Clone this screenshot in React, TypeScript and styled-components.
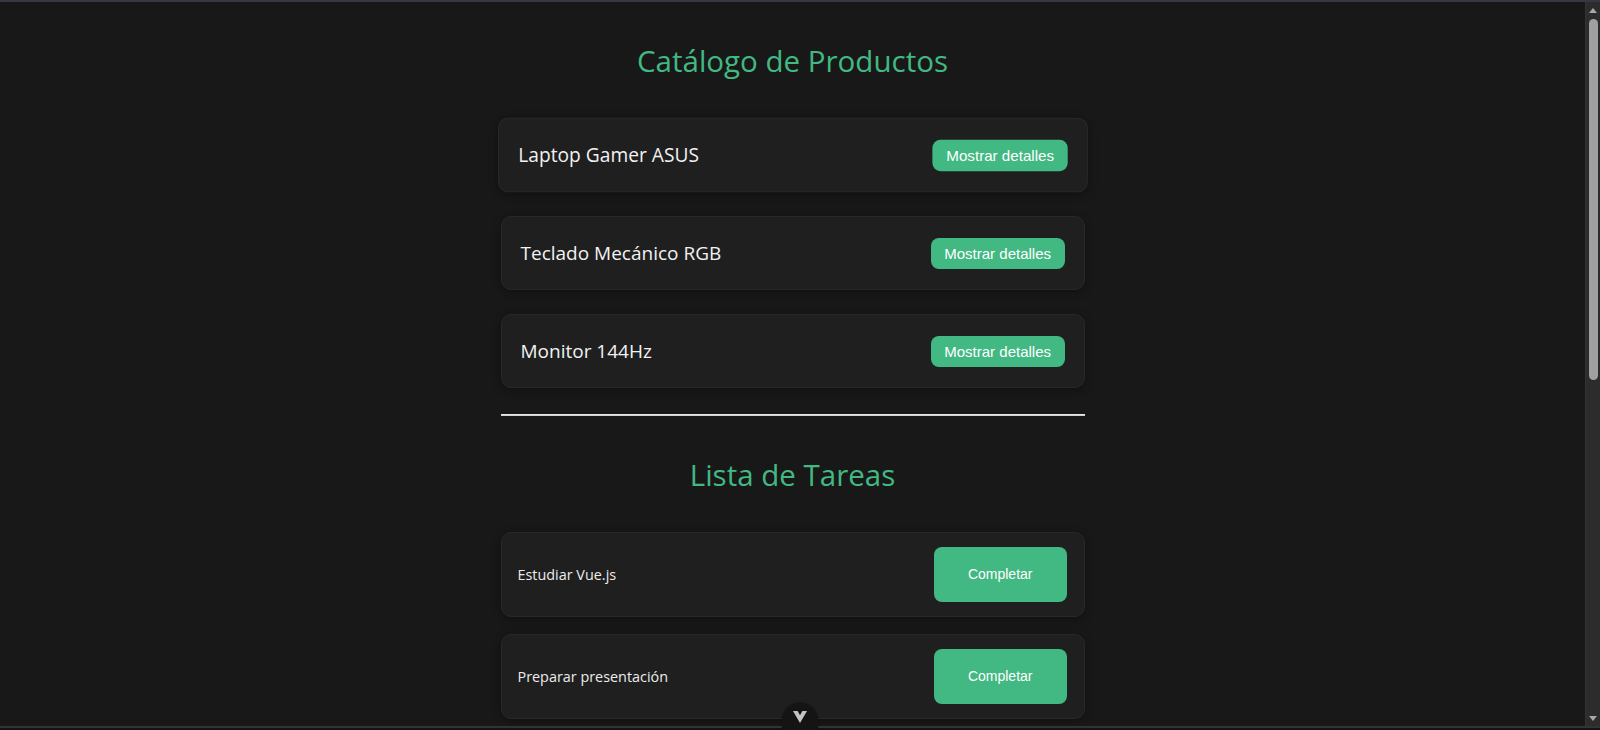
import styled, { createGlobalStyle } from "styled-components";

const GlobalStyle = createGlobalStyle`
  html, body {
    margin: 0;
    padding: 0;
    height: 100%;
    overflow: hidden;
    background: #181818;
  }
  * {
    box-sizing: border-box;
  }
`;

const green = "#42b883";
const bodyFont = `"Open Sans", "Noto Sans", sans-serif`;
const buttonFont = `"Liberation Sans", Arial, sans-serif`;

const Frame = styled.div`
  position: relative;
  display: flex;
  flex-direction: column;
  height: 100vh;
  background: #181818;
`;

const TopEdge = styled.div`
  flex: none;
  height: 2px;
  background: #3b3542;
`;

const BottomEdge = styled.div`
  flex: none;
  height: 4px;
  background: #131313;
  border-top: 2px solid #333333;
`;

const Viewport = styled.div`
  flex: 1;
  min-height: 0;
  display: flex;
`;

const Scroller = styled.div`
  flex: 1;
  overflow: hidden;
`;

const Rail = styled.div`
  flex: none;
  width: 15px;
  display: flex;
  flex-direction: column;
  background: #2c2c2c;
  border-left: 1px solid #333333;
`;

const RailArrow = styled.div<{ $down?: boolean }>`
  flex: none;
  height: 16px;
  display: flex;
  align-items: center;
  justify-content: center;
  &::before {
    content: "";
    border-left: 4.5px solid transparent;
    border-right: 4.5px solid transparent;
    ${({ $down }) =>
      $down ? "border-top: 5px solid #a8a8a8;" : "border-bottom: 5px solid #a8a8a8;"}
  }
`;

const RailTrack = styled.div`
  flex: 1;
  padding: 1px 2px 0 3px;
`;

const Thumb = styled.div`
  height: 361px;
  border-radius: 5px;
  background: #a0a0a0;
`;

const Page = styled.main`
  width: 584px;
  margin: 0 auto;
  padding: 39px 0 60px;
  font-family: ${bodyFont};
`;

const Title = styled.h1`
  margin: 0;
  font-size: 29.5px;
  font-weight: 400;
  line-height: 40px;
  text-align: center;
  color: ${green};
`;

const List = styled.div<{ $gap: number }>`
  display: flex;
  flex-direction: column;
  gap: ${({ $gap }) => $gap}px;
  margin-top: 37px;
`;

const Card = styled.div<{ $raised?: boolean }>`
  display: flex;
  align-items: center;
  justify-content: space-between;
  padding: 20.5px 19px;
  background: #1f1f1f;
  border: 1px solid #282828;
  border-radius: 10px;
  box-shadow: 0 2px 8px rgba(0, 0, 0, 0.35);
  transform: ${({ $raised }) => ($raised ? "scale(1.01)" : "none")};
`;

const TaskCard = styled(Card)`
  padding: 14px 17px 14px 16px;
`;

const ProductName = styled.span`
  font-size: 19px;
  line-height: 26px;
  color: #f2f2f2;
`;

const TaskName = styled.span`
  font-size: 14.4px;
  line-height: 20px;
  color: #ececec;
`;

const Button = styled.button<{ $big?: boolean }>`
  border: none;
  border-radius: 8px;
  background: ${green};
  color: #ffffff;
  font-family: ${buttonFont};
  font-size: ${({ $big }) => ($big ? "14px" : "15px")};
  line-height: ${({ $big }) => ($big ? "15px" : "17px")};
  padding: ${({ $big }) => ($big ? "20px 34px" : "7px 13.5px")};
  cursor: pointer;
`;

const Divider = styled.hr`
  margin: 26px 0 39px;
  height: 2px;
  border: none;
  background: linear-gradient(#f0f0f0, #c8c8c8);
`;

const DevtoolsTab = styled.div`
  position: absolute;
  left: 50%;
  bottom: 0;
  transform: translateX(-50%);
  width: 36px;
  height: 27px;
  display: flex;
  justify-content: center;
  padding-top: 8px;
  border-radius: 18px 18px 0 0;
  background: #141414;
  box-shadow: 0 0 2px rgba(0, 0, 0, 0.6);
`;

const products = ["Laptop Gamer ASUS", "Teclado Mecánico RGB", "Monitor 144Hz"];
const tasks = ["Estudiar Vue.js", "Preparar presentación"];

export default function App() {
  return (
    <>
      <GlobalStyle />
      <Frame>
        <TopEdge />
        <Viewport>
          <Scroller>
            <Page>
              <Title>Catálogo de Productos</Title>
              <List $gap={24}>
                {products.map((name, i) => (
                  <Card key={name} $raised={i === 0}>
                    <ProductName>{name}</ProductName>
                    <Button>Mostrar detalles</Button>
                  </Card>
                ))}
              </List>
              <Divider />
              <Title>Lista de Tareas</Title>
              <List $gap={17}>
                {tasks.map((name) => (
                  <TaskCard key={name}>
                    <TaskName>{name}</TaskName>
                    <Button $big>Completar</Button>
                  </TaskCard>
                ))}
              </List>
            </Page>
          </Scroller>
          <Rail>
            <RailArrow />
            <RailTrack>
              <Thumb />
            </RailTrack>
            <RailArrow $down />
          </Rail>
        </Viewport>
        <BottomEdge />
        <DevtoolsTab>
          <svg width="14" height="12" viewBox="0 0 14 12">
            <polygon points="0,0 4.6,0 7,4.2 9.4,0 14,0 7,12" fill="#c4c4c4" />
          </svg>
        </DevtoolsTab>
      </Frame>
    </>
  );
}
